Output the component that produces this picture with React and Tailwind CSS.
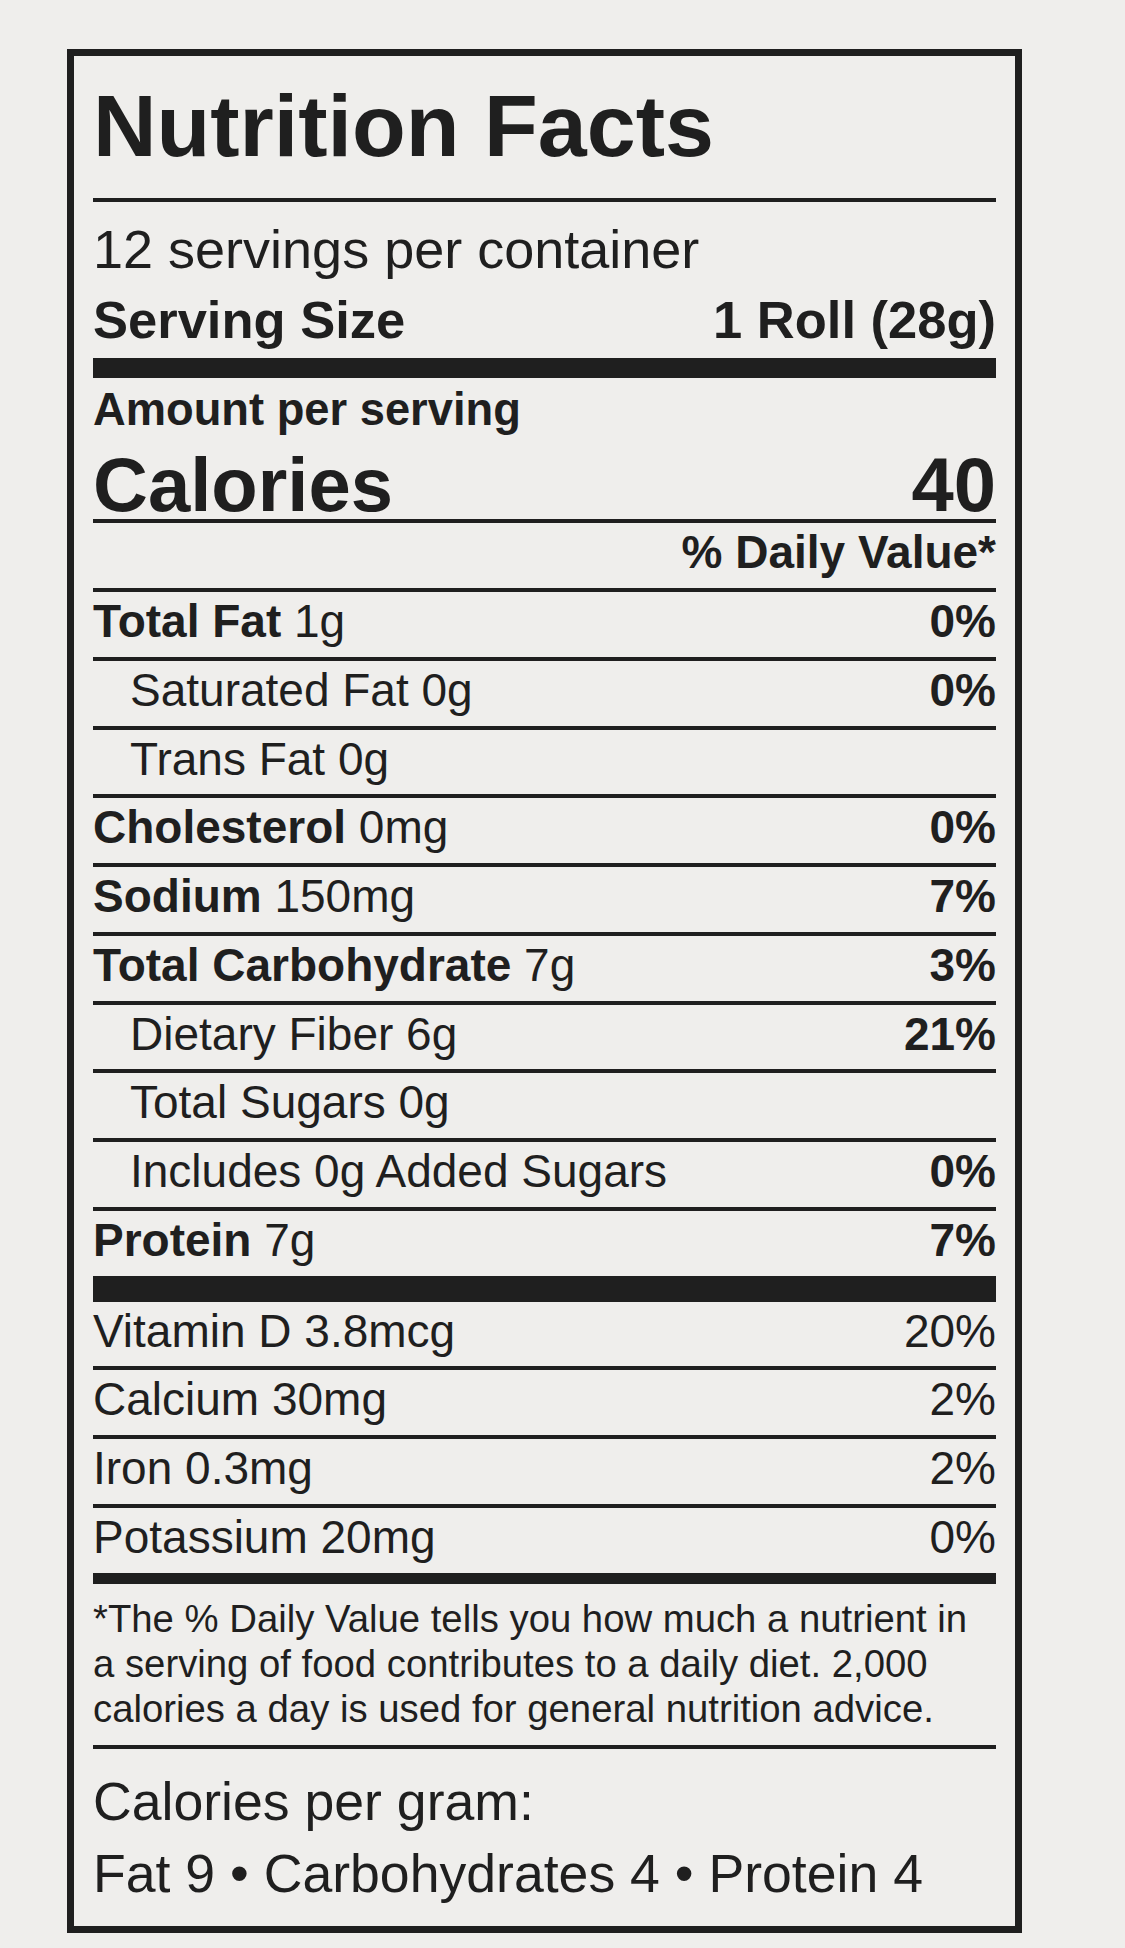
// Nutrition Facts label
const NUTRIENTS = [
  { name: 'Total Fat', amount: '1g', dv: '0%', bold: true },
  { name: 'Saturated Fat', amount: '0g', dv: '0%', indent: true },
  { name: 'Trans Fat', amount: '0g', dv: '', indent: true },
  { name: 'Cholesterol', amount: '0mg', dv: '0%', bold: true },
  { name: 'Sodium', amount: '150mg', dv: '7%', bold: true },
  { name: 'Total Carbohydrate', amount: '7g', dv: '3%', bold: true },
  { name: 'Dietary Fiber', amount: '6g', dv: '21%', indent: true },
  { name: 'Total Sugars', amount: '0g', dv: '', indent: true },
  { name: 'Includes 0g Added Sugars', amount: '', dv: '0%', indent: true },
  { name: 'Protein', amount: '7g', dv: '7%', bold: true },
];

const VITAMINS = [
  { name: 'Vitamin D 3.8mcg', dv: '20%' },
  { name: 'Calcium 30mg', dv: '2%' },
  { name: 'Iron 0.3mg', dv: '2%' },
  { name: 'Potassium 20mg', dv: '0%' },
];

const Rule = ({ h = 'h-[4px]' }) => <div className={`${h} bg-[#1f1f1f]`} />;

function NutrientRow({ row }) {
  return (
    <div className={`flex justify-between h-[64.75px] leading-[58px] text-[46px] ${row.indent ? 'pl-[37px]' : ''}`}>
      <span>
        {row.bold ? <span className="font-bold">{row.name}</span> : row.name}
        {row.amount ? ` ${row.amount}` : ''}
      </span>
      <span className="font-bold">{row.dv}</span>
    </div>
  );
}

export default function App() {
  return (
    <div
      className="w-[1125px] h-[1948px] bg-[#efeeec] text-[#1f1f1f] pt-[49px] pl-[67px]"
      style={{ fontFamily: '"Liberation Sans", Arial, sans-serif' }}
    >
      <div className="w-[955px] h-[1884px] border-[7px] border-[#1f1f1f] px-[19px]">
        {/* Title */}
        <div className="h-[142px] leading-[140px] text-[88px] font-bold">Nutrition Facts</div>
        <Rule />

        {/* Servings */}
        <div className="pt-[17px] h-[77px] leading-[60px] text-[54px]">12 servings per container</div>
        <div className="mt-[11px] flex justify-between h-[60px] leading-[60px] text-[52.5px] font-bold">
          <span>Serving Size</span>
          <span>1 Roll (28g)</span>
        </div>
        <div className="h-[8px]" />
        <Rule h="h-[20px]" />

        {/* Calories */}
        <div className="pt-[7px] h-[57px] leading-[50px] text-[45.3px] font-bold">Amount per serving</div>
        <div className="mt-[16px] flex justify-between h-[68px] leading-[68px] text-[76px] font-bold">
          <span>Calories</span>
          <span>40</span>
        </div>
        <Rule />
        <div className="h-[65px] leading-[58px] text-[46px] font-bold text-right">% Daily Value*</div>

        {/* Nutrients */}
        {NUTRIENTS.map((row) => (
          <div key={row.name}>
            <Rule />
            <NutrientRow row={row} />
          </div>
        ))}
        <Rule h="h-[26px]" />

        {/* Vitamins & minerals */}
        {VITAMINS.map((v, i) => (
          <div key={v.name}>
            {i > 0 && <Rule />}
            <div className="flex justify-between h-[64.75px] leading-[58px] text-[46px]">
              <span>{v.name}</span>
              <span>{v.dv}</span>
            </div>
          </div>
        ))}
        <Rule h="h-[11px]" />

        {/* Footnote */}
        <p className="pt-[12px] leading-[45px] text-[38.3px]">
          *The % Daily Value tells you how much a nutrient in
          <br />
          a serving of food contributes to a daily diet. 2,000
          <br />
          calories a day is used for general nutrition advice.
        </p>
        <div className="h-[14px]" />
        <Rule />

        <div className="pt-[16px] leading-[72px] text-[53.6px]">
          <div>Calories per gram:</div>
          <div>Fat 9 • Carbohydrates 4 • Protein 4</div>
        </div>
      </div>
    </div>
  );
}
